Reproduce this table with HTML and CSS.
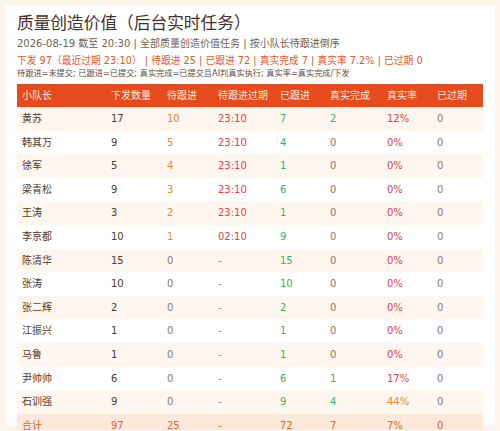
FILE: index.html
```html
<!DOCTYPE html>
<html lang="zh-CN">
<head>
<meta charset="utf-8">
<title>质量创造价值</title>
<link rel="stylesheet" href="styles.css">
</head>
<body>
<div class="card">
  <h1 class="title">质量创造价值（后台实时任务）</h1>
  <div class="sub">2026-08-19 截至 20:30 | 全部质量创造价值任务 | 按小队长待跟进倒序</div>
  <div class="summary">下发 97（最近过期 23:10） | 待跟进 25 | 已跟进 72 | 真实完成 7 | 真实率 7.2% | 已过期 0</div>
  <div class="note">待跟进=未提交; 已跟进=已提交; 真实完成=已提交且AI判真实执行; 真实率=真实完成/下发</div>
  <table class="grid">
    <colgroup>
      <col class="c1"><col class="c2"><col class="c3"><col class="c4"><col class="c5"><col class="c6"><col class="c7"><col class="c8">
    </colgroup>
    <thead>
      <tr><th>小队长</th><th>下发数量</th><th>待跟进</th><th>待跟进过期</th><th>已跟进</th><th>真实完成</th><th>真实率</th><th>已过期</th></tr>
    </thead>
    <tbody>
      <tr><td class="name">黄苏</td><td class="num">17</td><td class="warn">10</td><td class="red">23:10</td><td class="green">7</td><td class="green">2</td><td class="red">12%</td><td class="zero">0</td></tr>
      <tr><td class="name">韩其万</td><td class="num">9</td><td class="warn">5</td><td class="red">23:10</td><td class="green">4</td><td class="zero">0</td><td class="red">0%</td><td class="zero">0</td></tr>
      <tr><td class="name">徐军</td><td class="num">5</td><td class="warn">4</td><td class="red">23:10</td><td class="green">1</td><td class="zero">0</td><td class="red">0%</td><td class="zero">0</td></tr>
      <tr><td class="name">梁青松</td><td class="num">9</td><td class="warn">3</td><td class="red">23:10</td><td class="green">6</td><td class="zero">0</td><td class="red">0%</td><td class="zero">0</td></tr>
      <tr><td class="name">王涛</td><td class="num">3</td><td class="warn">2</td><td class="red">23:10</td><td class="green">1</td><td class="zero">0</td><td class="red">0%</td><td class="zero">0</td></tr>
      <tr><td class="name">李京都</td><td class="num">10</td><td class="warn">1</td><td class="red">02:10</td><td class="green">9</td><td class="zero">0</td><td class="red">0%</td><td class="zero">0</td></tr>
      <tr><td class="name">陈清华</td><td class="num">15</td><td class="zero">0</td><td class="dash">-</td><td class="green">15</td><td class="zero">0</td><td class="red">0%</td><td class="zero">0</td></tr>
      <tr><td class="name">张涛</td><td class="num">10</td><td class="zero">0</td><td class="dash">-</td><td class="green">10</td><td class="zero">0</td><td class="red">0%</td><td class="zero">0</td></tr>
      <tr><td class="name">张二辉</td><td class="num">2</td><td class="zero">0</td><td class="dash">-</td><td class="green">2</td><td class="zero">0</td><td class="red">0%</td><td class="zero">0</td></tr>
      <tr><td class="name">江振兴</td><td class="num">1</td><td class="zero">0</td><td class="dash">-</td><td class="green">1</td><td class="zero">0</td><td class="red">0%</td><td class="zero">0</td></tr>
      <tr><td class="name">马鲁</td><td class="num">1</td><td class="zero">0</td><td class="dash">-</td><td class="green">1</td><td class="zero">0</td><td class="red">0%</td><td class="zero">0</td></tr>
      <tr><td class="name">尹帅帅</td><td class="num">6</td><td class="zero">0</td><td class="dash">-</td><td class="green">6</td><td class="green">1</td><td class="red">17%</td><td class="zero">0</td></tr>
      <tr><td class="name">石训强</td><td class="num">9</td><td class="zero">0</td><td class="dash">-</td><td class="green">9</td><td class="green">4</td><td class="warn">44%</td><td class="zero">0</td></tr>
      <tr class="total"><td>合计</td><td>97</td><td>25</td><td>-</td><td>72</td><td>7</td><td>7%</td><td>0</td></tr>
    </tbody>
  </table>
</div>
</body>
</html>
```
FILE: styles.css
```css
html {
  background: #fdf4ec;
  overflow: hidden;
}
body {
  margin: 0;
  padding: 5px;
  font-family: "DejaVu Sans", "Noto Sans CJK SC", sans-serif;
  color: #4e3b30;
}
.card {
  background: #ffffff;
  height: 420px;
  box-sizing: border-box;
  padding: 7px 12px 0;
}
.title {
  margin: 0;
  font-size: 16.7px;
  line-height: 22px;
  font-weight: 400;
  color: #46302a;
}
.sub {
  margin-top: 3px;
  font-size: 10px;
  line-height: 14px;
  color: #6e5f55;
}
.summary {
  margin-top: 3px;
  font-size: 9.75px;
  line-height: 14px;
  color: #e3582b;
}
.note {
  font-size: 8.2px;
  line-height: 11px;
  color: #5e4c41;
}
.grid {
  margin-top: 5px;
  width: 466px;
  border-collapse: collapse;
  table-layout: fixed;
  font-size: 10px;
}
.c1 { width: 89px; }
.c2 { width: 56px; }
.c3 { width: 51px; }
.c4 { width: 62px; }
.c5 { width: 50px; }
.c6 { width: 57px; }
.c7 { width: 50px; }
.c8 { width: 51px; }
.grid th {
  background: #e54b1c;
  color: #fde8dc;
  font-weight: 400;
  text-align: left;
  padding: 0 5px;
  line-height: 23px;
}
.grid td {
  padding: 1px 5px 0;
  line-height: 22.6px;
  text-align: left;
  white-space: nowrap;
}
.grid tbody tr:nth-child(odd) { background: #fef6ef; }
.grid tbody tr:nth-child(even) { background: #ffffff; }
.grid tbody tr.total { background: #fde9d9; }
.name { color: #4e3b30; }
.num { color: #4e3b30; }
.warn { color: #e38c2c; }
.red { color: #e2424a; }
.green { color: #33b56a; }
.zero { color: #8a7a6e; }
.dash { color: #9a8a7e; }
.total td { color: #e8602c; }
```
